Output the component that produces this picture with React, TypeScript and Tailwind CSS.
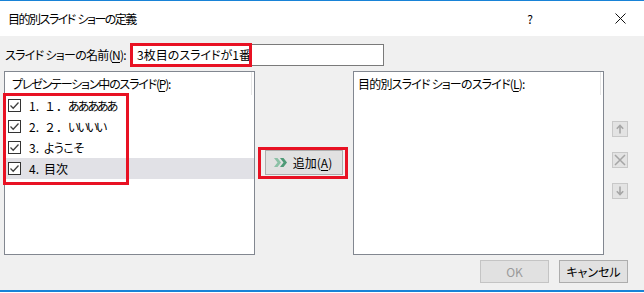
import React from "react";

const U = ({ c }: { c: string }) => <span className="underline underline-offset-[2px]">{c}</span>;

function CheckBox() {
  return (
    <div className="w-[13px] h-[13px] border border-[#333333] bg-white flex items-center justify-center shrink-0">
      <svg width="11" height="11" viewBox="0 0 11 11">
        <path d="M1.5 5.5 L4.2 8.2 L9.5 2.5" fill="none" stroke="#404040" strokeWidth="1.3" />
      </svg>
    </div>
  );
}

function Row({ num, children, sel }: { num: string; children: React.ReactNode; sel?: boolean }) {
  return (
    <div className={"h-[21px] flex items-center pl-[2px] whitespace-nowrap leading-none " + (sel ? "bg-[#e1e1e6]" : "")}>
      <CheckBox />
      <span className="ml-[8px] w-[15px] [font-feature-settings:normal]">{num}</span>
      {children}
    </div>
  );
}

export default function App() {
  return (
    <div className="w-[644px] h-[293px] bg-[#f0f0f0] flex flex-col overflow-hidden text-[12px] text-black font-['Noto_Sans_CJK_JP',sans-serif] [font-feature-settings:'palt']">
      <div className="h-px bg-[#1883d7] shrink-0" />
      <div className="h-[35px] bg-white flex items-center pl-[8px] shrink-0">
        <span className="leading-none tracking-[-1.5px] whitespace-nowrap">
          目的別スライド<span className="tracking-normal"> </span>ショーの定義
        </span>
        <span className="ml-auto leading-none mr-[82px]">?</span>
        <svg width="11" height="11" viewBox="0 0 11 11" className="mr-[18px]">
          <path d="M0.5 0.5 L10.5 10.5 M10.5 0.5 L0.5 10.5" stroke="#111" strokeWidth="1" />
        </svg>
      </div>
      <div className="flex-1 flex flex-col px-[4px]">
        <div className="mt-[8px] h-[22px] flex items-center">
          <span className="pl-[1px] w-[127px] leading-none whitespace-nowrap tracking-[-0.7px]">
            スライド ショーの名前(<U c="N" />):
          </span>
          <div className="relative w-[253px] h-[22px] border border-[#7a7a7a] bg-white flex items-center pl-[5px]">
            <span className="leading-none whitespace-nowrap">3枚目のスライドが1番</span>
            <div className="absolute -left-[2px] -top-[2px] w-[122px] h-[24px] border-[3px] border-[#e81123]" />
          </div>
        </div>
        <div className="mt-[5px] h-[184px] flex">
          <div className="relative w-[251px] border border-[#828790] bg-white">
            <div className="absolute right-[2px] top-0 h-[23px] w-px bg-[#e5e5e5]" />
            <div className="h-[23px] flex items-center pl-[7px] leading-none whitespace-nowrap tracking-[-1.2px]">
              プレゼンテーション中のスライド(<U c="P" />):
            </div>
            <div className="pl-[1px]">
              <Row num="1.">
                <span className="[font-feature-settings:normal]">１．</span>
                <span className="tracking-[-2px]">あああああ</span>
              </Row>
              <Row num="2.">
                <span className="[font-feature-settings:normal]">２．</span>
                <span className="tracking-[-2px]">いいいい</span>
              </Row>
              <Row num="3.">
                <span className="tracking-[-0.5px]">ようこそ</span>
              </Row>
              <Row num="4." sel>
                <span>目次</span>
              </Row>
            </div>
            <div className="absolute -left-[2px] top-[21px] w-[126px] h-[92px] border-[3px] border-[#e81123]" />
          </div>
          <div className="w-[98px] flex items-center justify-center">
            <div className="relative w-[78px] h-[25px] border border-[#adadad] bg-[#e1e1e1] flex items-center justify-center gap-[5px] -mt-[1px] pr-[2px]">
              <svg width="14" height="9" viewBox="0 0 14 9">
                <path d="M0 0 H3.5 L7 4.5 L3.5 9 H0 L3.5 4.5 Z" fill="#8cc1a6" />
                <path d="M6 0 H9.5 L13 4.5 L9.5 9 H6 L9.5 4.5 Z" fill="#4e9a76" />
              </svg>
              <span className="leading-none whitespace-nowrap">追加(<U c="A" />)</span>
              <div className="absolute -left-[8px] -top-[4px] w-[90px] h-[32px] border-[3px] border-[#e81123]" />
            </div>
          </div>
          <div className="relative w-[251px] border border-[#828790] bg-white">
            <div className="absolute right-[2px] top-0 h-[23px] w-px bg-[#e5e5e5]" />
            <div className="h-[23px] flex items-center pl-[4px] leading-none whitespace-nowrap tracking-[-0.8px]">
              目的別スライド ショーのスライド(<U c="L" />):
            </div>
          </div>
          <div className="flex-1 flex flex-col justify-center items-start pl-[8px] gap-[15px] mt-[-6px]">
            <div className="w-[16px] h-[16px] border border-[#c8c8c8] bg-[#e3e3e3] flex items-center justify-center">
              <svg width="10" height="10" viewBox="0 0 10 10">
                <path d="M5 1.5 V9.5 M1.8 4.7 L5 1.5 L8.2 4.7" fill="none" stroke="#a6a6a6" strokeWidth="1.6" />
              </svg>
            </div>
            <div className="w-[16px] h-[16px] border border-[#c8c8c8] bg-[#e3e3e3] flex items-center justify-center">
              <svg width="12" height="12" viewBox="0 0 12 12">
                <path d="M1 1 L11 11 M11 1 L1 11" fill="none" stroke="#a6a6a6" strokeWidth="1.5" />
              </svg>
            </div>
            <div className="w-[16px] h-[16px] border border-[#c8c8c8] bg-[#e3e3e3] flex items-center justify-center">
              <svg width="10" height="10" viewBox="0 0 10 10">
                <path d="M5 0.5 V8.5 M1.8 5.3 L5 8.5 L8.2 5.3" fill="none" stroke="#a6a6a6" strokeWidth="1.6" />
              </svg>
            </div>
          </div>
        </div>
        <div className="mt-[5px] flex justify-end gap-[10px] pr-[12px]">
          <div className="w-[69px] h-[23px] border border-[#c4c4c4] bg-[#e1e1e1] flex items-center justify-center text-[#9a9a9a] leading-none">
            OK
          </div>
          <div className="w-[69px] h-[23px] border border-[#adadad] bg-[#e1e1e1] flex items-center justify-center leading-none">
            キャンセル
          </div>
        </div>
      </div>
      <div className="h-[2px] bg-[#1883d7] shrink-0" />
      <div className="h-px bg-white shrink-0" />
    </div>
  );
}
